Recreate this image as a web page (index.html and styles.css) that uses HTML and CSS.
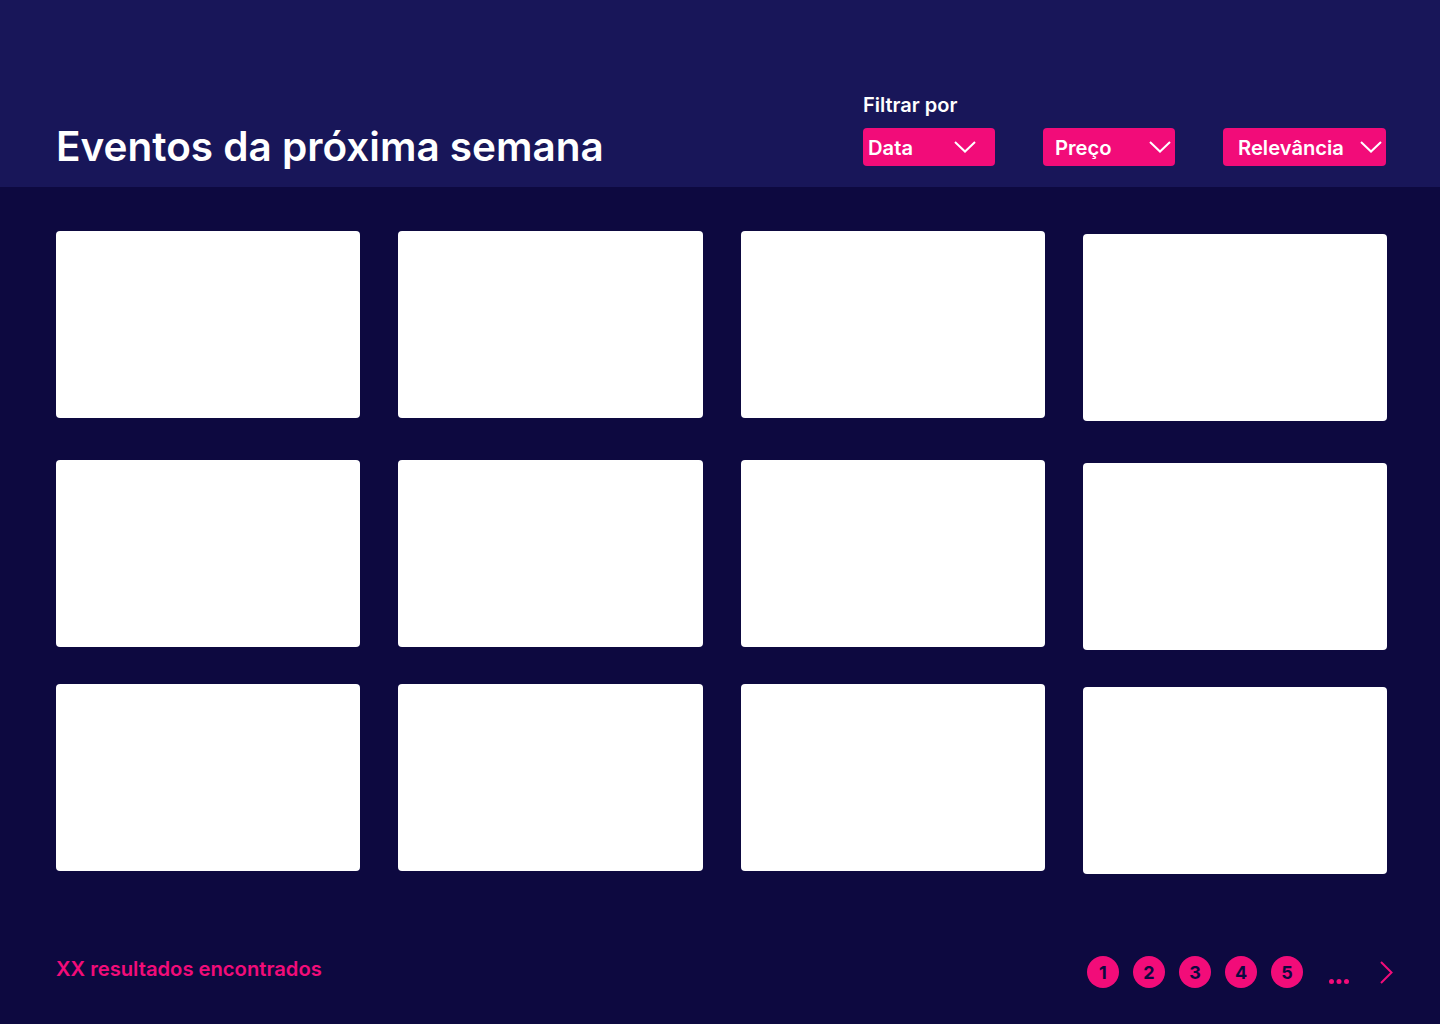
FILE: index.html
```html
<!DOCTYPE html>
<html lang="pt-BR">
<head>
  <meta charset="UTF-8">
  <title>Eventos da próxima semana</title>
  <meta name="viewport" content="width=device-width, initial-scale=1.0">
  <link rel="stylesheet" href="styles.css">
</head>
<body>
  <div class="header">
    <h1>Eventos da próxima semana</h1>

    <div class="filters">
      <span class="filters-label">Filtrar por</span>
      <div class="filters-row">
        <button class="dropdown dropdown-data">
          Data
          <svg width="22" height="12" viewBox="0 0 22 12"><polyline points="1,1 11,10.5 21,1" fill="none" stroke="#fff" stroke-width="2"/></svg>
        </button>
        <button class="dropdown dropdown-preco">
          Preço
          <svg width="22" height="12" viewBox="0 0 22 12"><polyline points="1,1 11,10.5 21,1" fill="none" stroke="#fff" stroke-width="2"/></svg>
        </button>
        <button class="dropdown dropdown-relevancia">
          Relevância
          <svg width="22" height="12" viewBox="0 0 22 12"><polyline points="1,1 11,10.5 21,1" fill="none" stroke="#fff" stroke-width="2"/></svg>
        </button>
      </div>
    </div>
  </div>

  <div class="content">
    <!-- event cards, empty placeholders for now -->
    <div class="cards">
      <div class="card"></div>
      <div class="card"></div>
      <div class="card"></div>
      <div class="card"></div>
      <div class="card"></div>
      <div class="card"></div>
      <div class="card"></div>
      <div class="card"></div>
      <div class="card"></div>
      <div class="card"></div>
      <div class="card"></div>
      <div class="card"></div>
    </div>

    <div class="footer">
      <p class="results">XX resultados encontrados</p>
      <div class="pagination">
        <span class="page">1</span>
        <span class="page">2</span>
        <span class="page">3</span>
        <span class="page">4</span>
        <span class="page">5</span>
        <svg class="dots" width="20" height="5" viewBox="0 0 20 5">
          <circle cx="2.5" cy="2.5" r="2.5" fill="#f20c79"/>
          <circle cx="10" cy="2.5" r="2.5" fill="#f20c79"/>
          <circle cx="17.5" cy="2.5" r="2.5" fill="#f20c79"/>
        </svg>
        <svg class="next" width="13" height="23" viewBox="0 0 13 23"><polyline points="1,1 11.5,11.5 1,22" fill="none" stroke="#f20c79" stroke-width="2"/></svg>
      </div>
    </div>
  </div>
</body>
</html>
```

FILE: styles.css
```css
html, body {
  margin: 0;
  padding: 0;
  background: #0d0940;
  color: #fff;
  font-family: Inter, "Noto Sans", sans-serif;
}
.header {
  background: #181659;
  height: 187px;
  box-sizing: border-box;
  padding: 0 54px 21px 56px;
  display: flex;
  justify-content: space-between;
  align-items: flex-end;
}
.header h1 {
  margin: 0 0 -3px;
  font-size: 40.5px;
  line-height: 44px;
  font-weight: 600;
}
.filters {
  display: flex;
  flex-direction: column;
}
.filters-label {
  font-size: 20px;
  font-weight: 600;
  line-height: 24px;
  margin-bottom: 11px;
}
.filters-row {
  display: flex;
  gap: 48px;
}
.dropdown {
  height: 38px;
  background: #f20c79;
  color: #fff;
  border: none;
  border-radius: 4px;
  font-family: inherit;
  font-size: 20.2px;
  font-weight: 600;
  display: flex;
  align-items: center;
  justify-content: space-between;
  cursor: pointer;
}
.dropdown-data {
  width: 132px;
  padding: 0 19px 0 5px;
}
.dropdown-preco {
  width: 132px;
  padding: 0 4px 0 12px;
}
.dropdown-relevancia {
  width: 163px;
  padding: 0 4px 0 15px;
}
.content {
  padding: 44px 53px 0 56px;
}
.cards {
  display: grid;
  grid-template-columns: repeat(4, 1fr);
  grid-template-rows: 229px 224px 187px;
  column-gap: 38px;
  align-items: start;
}
.card {
  height: 187px;
  background: #fff;
  border-radius: 4px;
}
.card:nth-child(4n) {
  margin-top: 3px;
}
.footer {
  margin: 85px -6px 0 0;
  display: flex;
  justify-content: space-between;
  align-items: center;
  height: 32px;
}
.results {
  margin: 0 0 8px;
  color: #f20c79;
  font-size: 20.2px;
  font-weight: 600;
}
.pagination {
  display: flex;
  align-items: center;
  height: 32px;
}
.page {
  width: 32px;
  height: 32px;
  border-radius: 50%;
  background: #f20c79;
  color: #0d0940;
  font-size: 18px;
  font-weight: 700;
  display: flex;
  align-items: center;
  justify-content: center;
  margin-right: 14px;
}
.page:first-child {
  margin-left: 1px;
}
.page:nth-child(5) {
  margin-right: 26px;
}
.dots {
  align-self: flex-end;
  margin-bottom: 4px;
  margin-right: 31px;
}
.next {
  display: block;
}
```
